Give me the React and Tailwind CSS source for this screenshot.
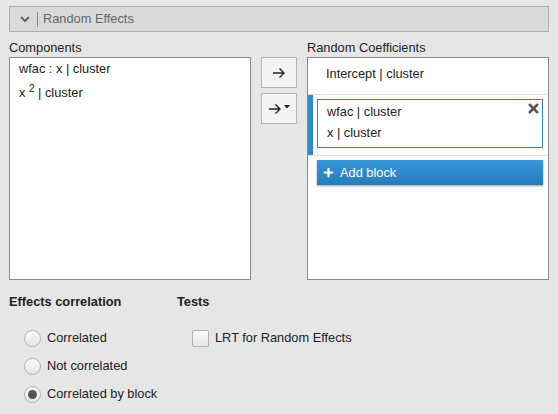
import { Plus, X } from 'lucide-react';

function ArrowBtn({ dropdown }) {
  return (
    <button className="w-9 h-[31px] bg-[#f4f4f4] border border-[#b5b5b5] flex items-center justify-center text-[#222]">
      <svg width="14" height="12" viewBox="0 0 14 12" fill="none" stroke="#222" strokeWidth="1.4">
        <path d="M1 6h11M7.5 1.5 12 6l-4.5 4.5" />
      </svg>
      {dropdown && (
        <svg width="6" height="4" viewBox="0 0 6 4" className="ml-0.5 mb-1"><path d="M0 0h6L3 3.5z" fill="#222" /></svg>
      )}
    </button>
  );
}

function Radio({ label, checked }) {
  return (
    <div className="flex items-center gap-[6px] h-[28px]">
      <div className="w-[17px] h-[17px] rounded-full border border-[#b0b0b0] bg-gradient-to-b from-[#fafafa] to-[#e6e6e6] flex items-center justify-center">
        {checked && <div className="w-[9px] h-[9px] rounded-full bg-[#555]" />}
      </div>
      <span>{label}</span>
    </div>
  );
}

export default function App() {
  return (
    <div className="w-[558px] h-[414px] bg-[#e6e6e6] text-[12.8px] text-[#222] font-['Liberation_Sans',Arial,sans-serif] overflow-hidden">
      <div className="pt-[6px] pl-[9px] pr-[9px]">
        <div className="h-[26px] border border-[#adadad] bg-[#d9d9d9] flex items-center">
          <svg width="12" height="8" viewBox="0 0 12 8" className="ml-[9px]" fill="none" stroke="#666" strokeWidth="2">
            <path d="M2 2l4 4 4-4" />
          </svg>
          <div className="w-px h-[15px] bg-[#888] ml-[6px]" />
          <span className="ml-[5px] text-[#666]">Random Effects</span>
        </div>
      </div>

      <div className="flex pl-[9px] mt-[7px]">
        <div className="w-[242px]">
          <div className="h-[18px] leading-[18px]">Components</div>
          <div className="h-[223px] bg-white border border-[#8a8a8a] pt-[3px] pl-[9px]">
            <div className="h-[23px] leading-[16px]">wfac : x | cluster</div>
            <div className="leading-[16px] mt-[1px]">x <sup className="text-[10px] -top-[5px]">2</sup> | cluster</div>
          </div>
        </div>

        <div className="w-[56px] pt-[18px] flex flex-col items-center gap-[5px]">
          <ArrowBtn />
          <ArrowBtn dropdown />
        </div>

        <div className="w-[242px]">
          <div className="h-[18px] leading-[18px]">Random Coefficients</div>
          <div className="h-[223px] bg-white border border-[#8a8a8a]">
            <div className="h-[37px] border-b border-[#e3e3e3] pl-[18px] pt-[8px] leading-[16px]">Intercept | cluster</div>
            <div className="flex h-[61px] border-b border-[#e3e3e3]">
              <div className="w-[5px] bg-[#2f88c9]" />
              <div className="flex-1 pl-[4px] pr-[5px] pt-[4px]">
                <div className="relative h-[49px] border border-[#2f88c9] pl-[9px] pt-[1px]">
                  <div className="leading-[21px]">wfac | cluster</div>
                  <div className="leading-[21px]">x | cluster</div>
                  <X className="absolute right-[1px] top-[1px] text-[#555]" size={15} strokeWidth={4} />
                </div>
              </div>
            </div>
            <div className="pl-[9px] pr-[5px] pt-[4px]">
              <div className="h-[25px] bg-gradient-to-b from-[#3497db] to-[#2a7bb9] shadow-[0_1px_2px_rgba(0,0,0,0.4)] flex items-center text-white pl-[5px]">
                <Plus size={13} strokeWidth={4} />
                <span className="ml-[5px]">Add block</span>
              </div>
            </div>
          </div>
        </div>
      </div>

      <div className="flex pl-[9px] mt-[13px]">
        <div className="w-[168px]">
          <div className="font-bold h-[18px] leading-[18px]">Effects correlation</div>
          <div className="pl-[15px] mt-[13px]">
            <Radio label="Correlated" />
            <Radio label="Not correlated" />
            <Radio label="Correlated by block" checked />
          </div>
        </div>
        <div>
          <div className="font-bold h-[18px] leading-[18px]">Tests</div>
          <div className="pl-[15px] mt-[13px]">
            <div className="flex items-center gap-[6px] h-[28px]">
              <div className="w-[17px] h-[17px] rounded-[2px] border border-[#b0b0b0] bg-gradient-to-b from-[#fafafa] to-[#e6e6e6]" />
              <span>LRT for Random Effects</span>
            </div>
          </div>
        </div>
      </div>
    </div>
  );
}
